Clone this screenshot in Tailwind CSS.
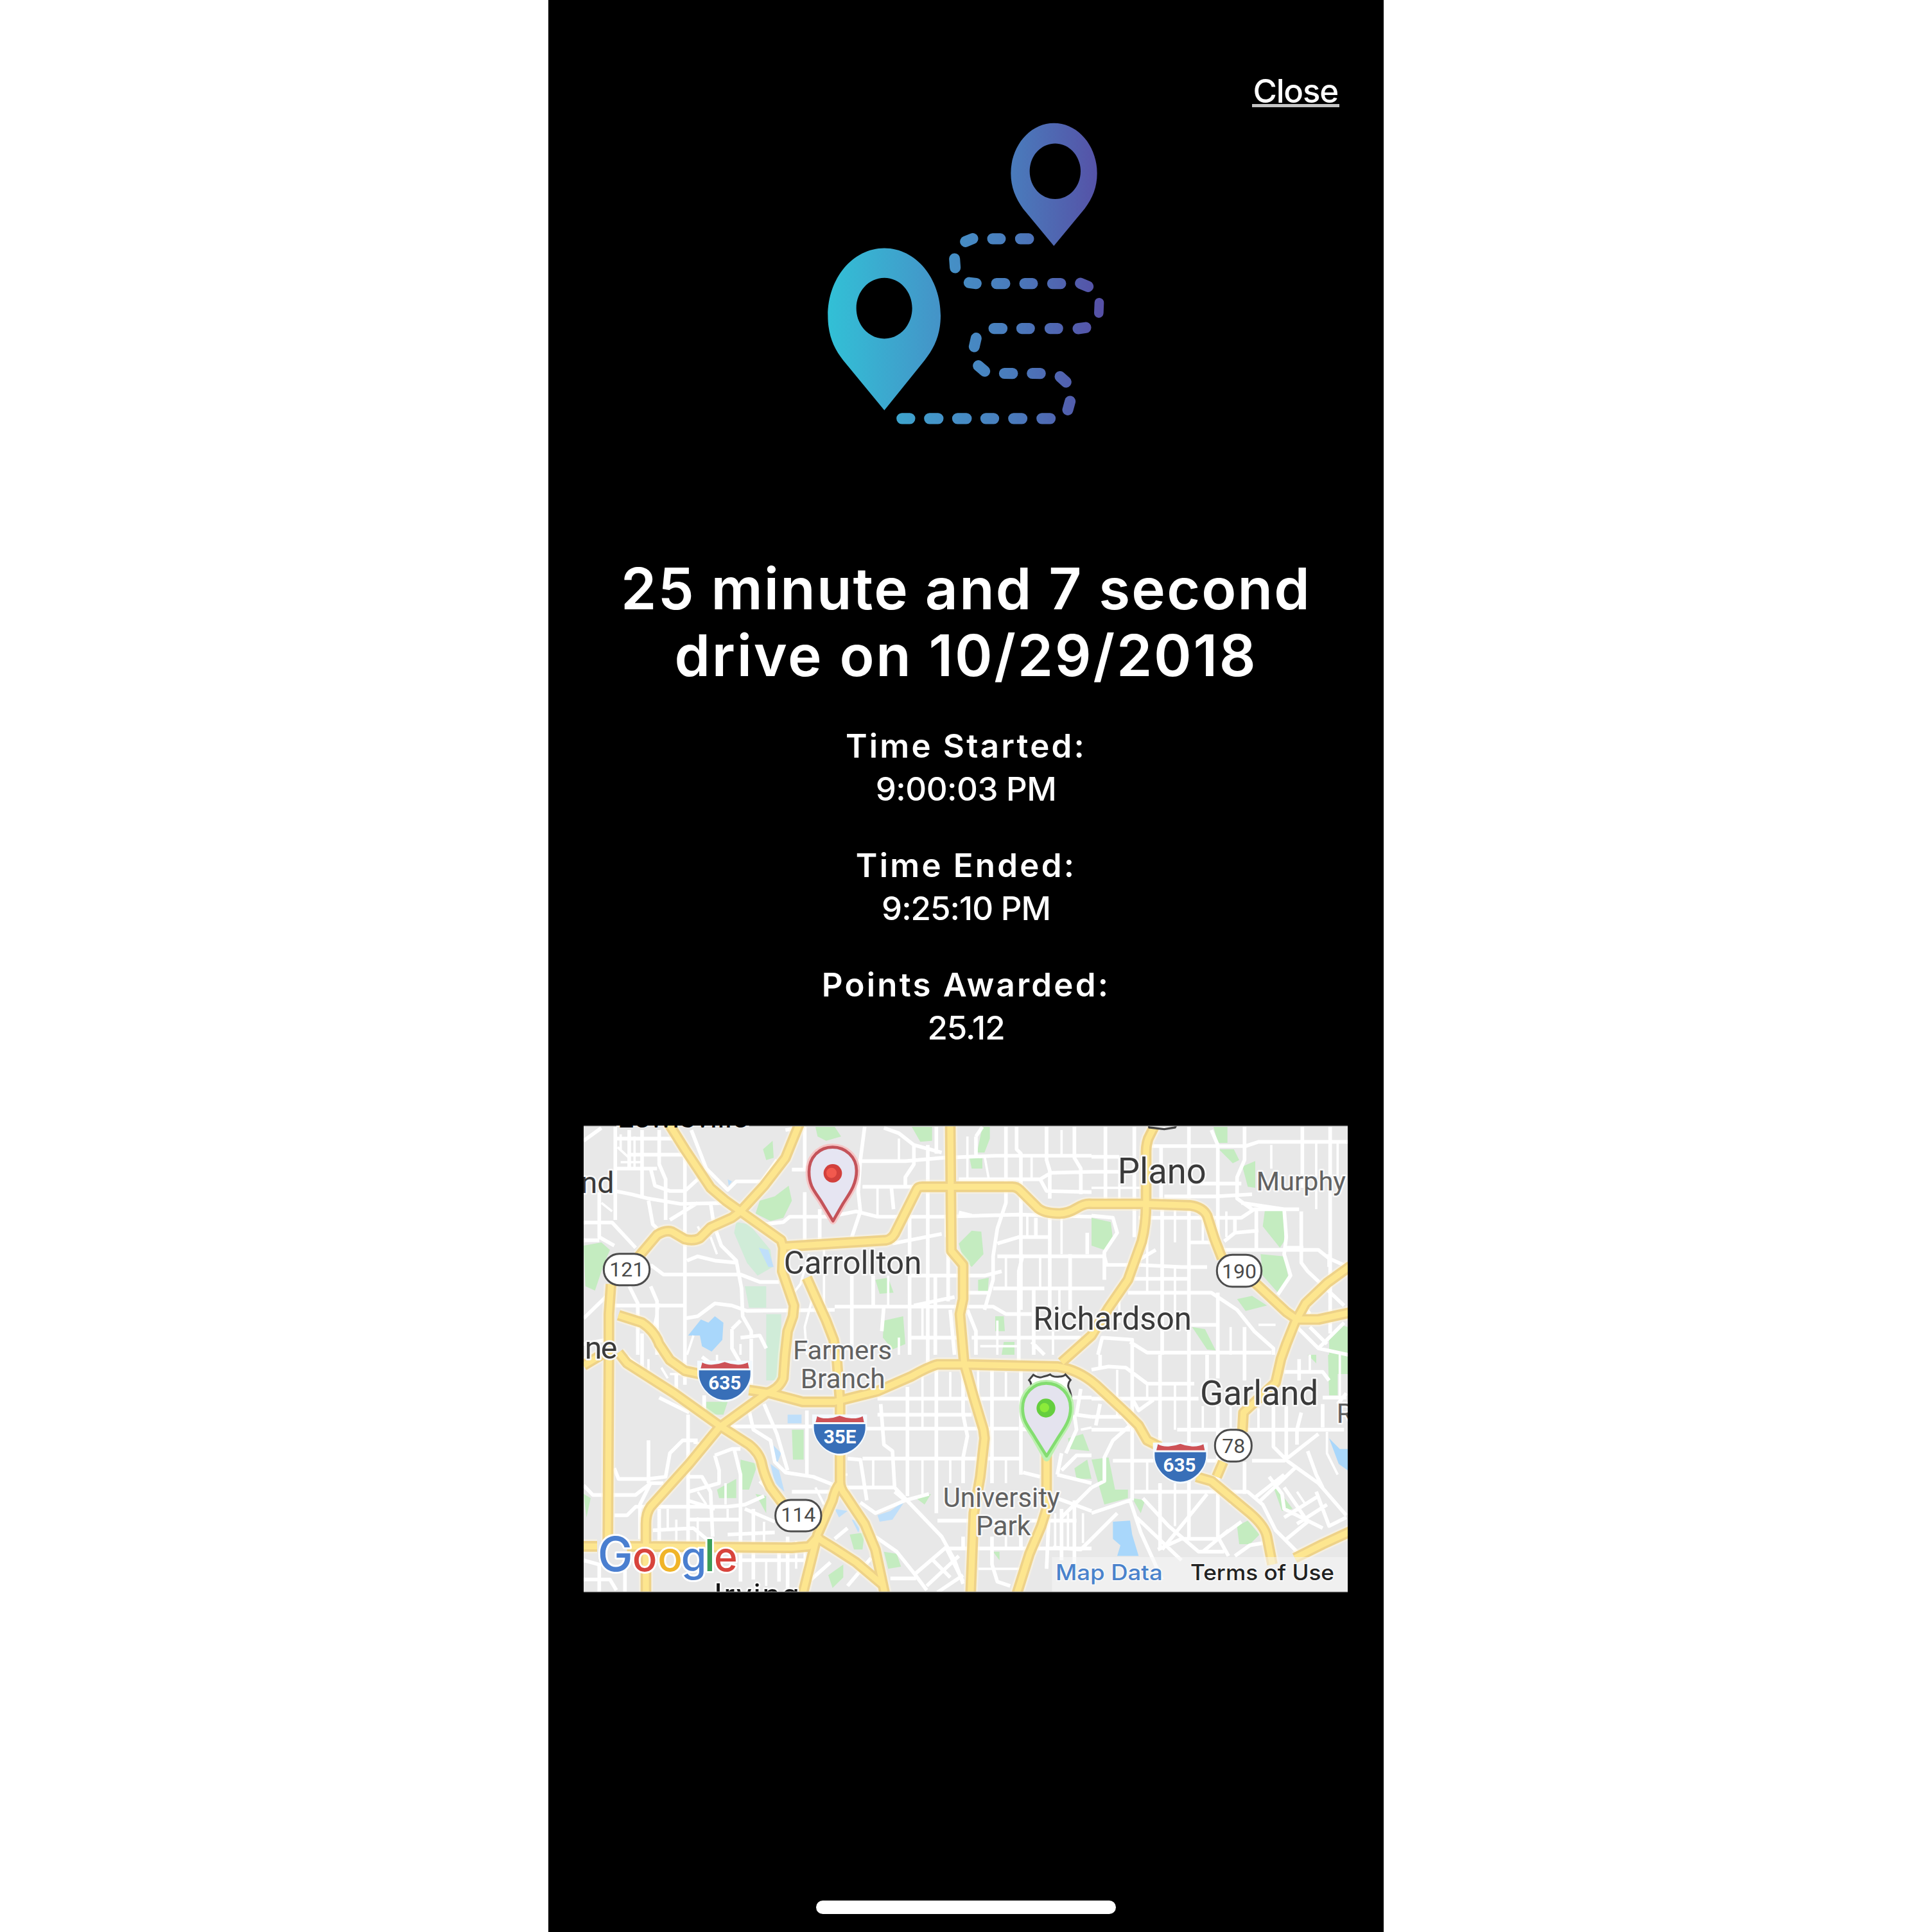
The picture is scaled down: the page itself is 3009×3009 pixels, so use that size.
<!DOCTYPE html>
<html lang="en">
<head>
<meta charset="utf-8">
<title>Drive details</title>
<script src="https://cdn.jsdelivr.net/npm/@tailwindcss/browser@4"></script>
</head>
<body class="bg-white">
<main class="mx-auto flex h-[3009px] w-[1301px] flex-col overflow-hidden bg-black font-['Inter',sans-serif] text-white">
  <header class="flex h-[190px] justify-end pt-[110px] pr-[69px]">
    <a class="h-[57px] border-b-[5px] border-[#c4c4c4] pr-0.5 pl-0.5 text-[51px] leading-[63px] font-medium tracking-[-1.2px]">Close</a>
  </header>

  <svg class="ml-[396px] block h-[500px] w-[500px] shrink-0" viewBox="0 88.7 1500 1479.3" preserveAspectRatio="none" fill="none">
    <defs>
      <linearGradient id="route" gradientUnits="userSpaceOnUse" x1="120" y1="0" x2="1400" y2="0">
        <stop offset="0" stop-color="#32c0d6"/><stop offset=".4" stop-color="#4494c8"/><stop offset=".68" stop-color="#4a7abb"/><stop offset="1" stop-color="#5650a6"/>
      </linearGradient>
    </defs>
    <path fill="url(#route)" fill-rule="evenodd" d="M382 670C530 670 645 810 645 980C645 1070 615 1130 570 1187L382 1417L190 1187C145 1130 118 1070 118 980C118 810 234 670 382 670ZM382 807C309 807 251 870 251 947C251 1024 309 1087 382 1087C455 1087 512 1024 512 947C512 870 455 807 382 807Z"/>
    <path fill="url(#route)" fill-rule="evenodd" d="M1174 94C1288 94 1376 200 1376 325C1376 390 1355 440 1318 488L1174 660L1030 488C995 440 973 390 973 325C973 200 1062 94 1174 94ZM1180 188C1114 188 1061 245 1061 316C1061 387 1114 444 1180 444C1246 444 1299 387 1299 316C1299 245 1246 188 1180 188Z"/>
    <g stroke="url(#route)" stroke-width="51" stroke-linecap="round">
      <path d="M1018 627L1056 627.1M888 627L924 627.1M761 640L795 626M710 719L713 760M778 829L811 833M906 833L945 833.1M1038 833L1074 833.1M1168 833L1206 833.1M1298 832L1334 847M894 1040L932 1040.1M1024 1040L1060 1040.1M1156 1040L1192 1040.1M1287 1041L1323 1036M811 1085L802 1124M821 1212L851 1237M943 1247L981 1247.1M1073 1247L1111 1247.1M1203 1262L1231 1287M1250 1376L1239 1415M464 1455L501 1455.1M593 1455L633 1455.1M724 1455L765 1455.1M856 1455L893 1455.1M986 1455L1025 1455.1M1118 1455L1157 1455.1"/>
      <path stroke-width="44" d="M1386 921L1384 969"/>
    </g>
  </svg>

  <h1 class="mt-[175px] text-center text-[89px] leading-[104px] font-semibold whitespace-nowrap"><span class="tracking-[2.2px]">25 minute and 7 second</span><br><span class="tracking-[2.7px]">drive on 10/29/2018</span></h1>

  <dl class="mt-[55px] flex flex-col gap-[52px] text-center text-[51px] leading-[67px]">
    <div><dt class="font-semibold tracking-[3.2px]">Time Started:</dt><dd class="font-medium tracking-[-0.5px]">9:00:03 PM</dd></div>
    <div><dt class="font-semibold tracking-[3.2px]">Time Ended:</dt><dd class="font-medium tracking-[-1px]">9:25:10 PM</dd></div>
    <div><dt class="font-semibold tracking-[3.2px]">Points Awarded:</dt><dd class="font-medium tracking-[-1px]">25.12</dd></div>
  </dl>

  <svg class="mt-[119px] ml-[55px] block h-[727px] w-[1190px] shrink-0 bg-[#e8e8e8] font-['Roboto',sans-serif]" viewBox="27 39 3570 2181" fill="none">
    <!-- parks -->
    <g fill="#c4ecc0">
      <path d="M27 600L110 585L150 620L120 690L80 810L35 790Z"/>
      <path d="M865 150L910 110L915 190L880 200ZM1110 45H1200L1230 90L1160 110L1120 90Z"/>
      <path d="M985 320L1000 390L960 470L900 485L830 450L850 390L920 370Z"/>
      <path fill="#d0ecd8" d="M740 490L800 500L900 620L910 700L840 740L790 680L730 540ZM780 790L880 790V890H800ZM880 920H950V1230H880Z"/>
      <path d="M1560 45H1655V110L1600 115ZM1890 45H1925V100L1900 165H1865ZM1830 190H1890V240H1840ZM1780 590L1840 530L1885 535L1895 640L1840 700L1800 660ZM1870 760L1920 750L1915 820L1870 815ZM1390 760L1450 750L1475 820L1410 825ZM1430 950L1520 930L1530 1060L1470 1085L1425 1030ZM1950 930L1990 930L1995 1000H1950ZM1990 1050H2040V1110H1980Z"/>
      <path d="M2970 45H3035V120H2990ZM2995 150H3065L3090 200L3060 215ZM3105 230L3165 205V330L3130 325ZM2400 470L2490 490L2500 570L2460 620L2400 600ZM3210 435H3300V580L3280 610L3200 510ZM3190 640L3300 650L3320 750L3280 830L3200 740ZM3080 850L3150 835L3220 880L3120 905ZM2870 980L2930 990L2980 1090L2940 1085ZM3560 970L3597 980V1200H3510V1040Z"/>
      <path d="M3505 1110H3550V1300H3510ZM3410 1110H3450V1150ZM2400 1600L2480 1590L2510 1740L2570 1740V1780L2460 1810ZM2590 1780L2650 1790L2630 1850ZM3080 1910L3130 1885L3185 1950L3140 1995H3090ZM3240 1700L3340 1830L3290 1840Z"/>
      <path d="M600 1330H700L680 1390H600ZM1000 1460H1055V1600H1005ZM760 1600L840 1620L800 1740L760 1740ZM650 1740L740 1690V1780H660ZM830 1760L880 1770V1850ZM27 1760L60 1780L40 1870ZM1270 1950L1340 1940L1330 2020L1290 2020ZM1430 2030L1490 2040L1510 2100L1450 2110ZM1580 1780L1650 1760L1620 1810ZM1940 2030H1970V2070ZM2290 1500L2360 1480L2390 1560L2300 1550ZM2320 1640L2380 1600L2400 1690L2330 1690ZM1170 2140L1240 2090V2150L1190 2200Z"/>
    </g>
    <!-- water -->
    <g fill="#a9d7fb">
      <path d="M515 1020L575 945L610 960L640 930L680 960L675 1040L625 1095L580 1070L570 1020Z"/>
      <path fill="#bfdffa" d="M845 610L890 620L915 700L890 700ZM980 1390H1045V1430H980ZM900 1620L940 1650L965 1750L920 1710ZM1280 1880L1330 1890L1310 1940ZM1400 1860L1460 1840L1530 1790L1470 1880L1410 1890ZM1200 1830L1260 1840L1220 1870ZM910 1530L950 1570L930 1620ZM700 290L720 300L705 320Z"/>
      <path d="M2500 1890L2580 1885L2590 1950L2620 2050L2520 2050L2535 2000L2500 1970ZM3510 1500L3560 1550H3597V1650L3555 1620Z"/>
    </g>
    <!-- local streets -->
    <g stroke="#fff" stroke-width="17" stroke-linejoin="round">
      <path d="M27 110L110 50M175 45V480M240 60V240M300 60V380M380 60V220L410 290V480M175 100H450M240 175H500M175 240H370M500 170V1250M340 240L360 320L430 345H500L560 290M175 345L250 360L330 380L480 405L720 400M27 492H160L270 610M100 350V560L170 600M27 575H100M330 390L350 500L370 520M430 480L560 400M620 400L635 500L670 600L740 670L765 800L770 930L810 1000V1250M510 670L560 650L640 670L740 680M340 690L400 735H760L850 770H940M27 940L140 830M150 880H500M240 790L280 870V1110M340 790L370 860V1110M500 940L560 930L640 870L720 880L790 905L1200 900M720 990L760 950M720 990V1080L760 1150M760 1030L850 1020L880 1080M530 60L600 240L700 340L740 300H860L930 200M1000 245H1060V45M1060 350V580M870 500L960 490L990 465H1200M1130 430V580M970 60L1060 45M300 1010V1200M27 1060L130 1040"/>
      <path stroke-width="11" d="M200 80V150M265 90V240M200 210H300M185 140L240 190M110 400L160 440M380 870L350 1000L400 1050M560 510L590 570M620 560L650 640M760 1060V1110M540 1020L510 1110M650 1110V1200M1080 640L1040 780L1000 830M1150 620V900M1100 830L1060 980L1070 1110"/>
      <g transform="translate(1200 0)">
        <path d="M140 45L120 200L110 350L120 440L80 560M110 205H330L500 190L750 180H1200M230 50L300 75L370 130L500 165M370 130V220L330 280V330M130 325H400M265 330L275 430M0 460L100 440L200 465L500 465L860 455L1200 465M435 130V300M475 45V170M435 350V1150M350 470V1110M270 590L500 545M800 45V400L760 520L740 650V760L700 900M850 45V150L870 170V900M990 45V200L1005 250V380M1120 45V190L1150 240V360M960 290L1010 260L1200 255M960 290L990 345L1200 350M580 290H960M580 445L640 460M660 90L690 45M660 90V180M760 590L860 560H1000M880 640L860 720V1150M760 650H1200M740 800H1200M620 820L720 820M350 740H700L780 720M470 740V1110M0 885H740L800 920H920M370 880L560 840M80 740V1110M180 740V880M230 880L220 1000M540 900L560 1110M350 1030H580M620 900L660 1000V1110M0 1080H80M640 1030H1150M930 800V1110M1005 460V930M1100 640V900M920 1050L980 1110M940 470V560M530 640V860M1180 540V640"/>
        <path stroke-width="11" d="M60 200V330M200 330V460M300 100V200M520 465V560M620 90V290M700 180L720 290M920 180V290M1060 60V180M900 460V560M1060 470V640M800 650V800M960 650V800M1050 800V930M250 740V880M300 1030V1110M410 885V1030M760 950V1110M1020 1000V1110M680 1070H860"/>
      </g>
      <g transform="translate(2400 0)">
        <path d="M65 45V400M200 45V560M325 130V400M455 45V380M330 420V1110M455 420V1110M0 185H130M0 255H130M280 135H720L780 115H1200M560 60L590 130V560M715 45V200L680 280V380L750 430M985 45V330M1115 45V1010M0 460L100 470L120 540L60 630V760M220 470H700L760 430H970M460 585H590M620 580L670 540L780 530M770 430V620M340 370L580 370L750 360M700 400L900 430L910 560L900 640L930 740L870 830M980 440V680L1010 720L1180 880M600 620H1060L1110 660L1200 700M0 650H60L70 690H180L300 620M220 690L420 700H540M200 755H460M170 820H560L680 900L760 1000L850 1080V1110M0 800H60M460 970L590 970M590 820V1110M715 980V1110M190 1110V1040L50 1030L30 1110M180 1050L260 1100H840M960 980L1060 1080L1200 1110M1020 980L1100 1060M1060 1080L1180 960M900 610L990 610M460 310H700M670 470V540M980 860L1020 920M1110 640V700"/>
        <path stroke-width="11" d="M130 185V400M0 330H250M260 560V820M390 420V585M520 420V585M630 440V560M840 130V240M1050 120V430M390 700V970M650 980V1110M130 820V960M1060 800L1120 740M780 970H860M1150 120V330"/>
      </g>
      <g transform="translate(0 1110)">
        <path d="M330 400V600M170 530L190 580H330L410 570L430 460L490 400H560M27 610L70 655H270L340 600H400M340 600L290 700V860M170 750H230L270 710H700L780 700L870 660M515 280V880M380 200L520 270M230 10L330 90L460 180M590 190V260M700 335H1100M800 260L820 350L900 400L920 500L970 550L1100 570L1200 610M870 230L930 370L980 540M1070 260V560M640 470L720 440H760M640 470L660 540V600L520 640M730 440L760 560V880M520 570H580L620 640L630 850M510 680L640 720M510 770H760M780 720L920 780M350 820L540 810L600 860M380 720V870M700 840L920 830M820 720V880M980 850V1110M760 960H1100M820 920V1050M760 920V1060M940 920V1060M27 960L100 980V1110M220 1000V1110M27 1050H150L180 1100M1090 1050L1180 970M1000 640H1200M440 60H500M460 90V180M580 10L620 40M850 590L900 640"/>
        <path stroke-width="11" d="M330 20V110M390 60L420 110M430 90H560M540 410L600 420M690 600V700M560 640L600 700M420 720V810M460 770V870M560 760V870M700 720V770M870 780V880M1020 870V1000M1060 920V1080M880 960V1080M290 920V1000M1110 620L1150 700"/>
      </g>
      <g transform="translate(1200 1110)">
        <path d="M340 150V660M475 50V740M600 70V280L620 380L600 480V600M735 60V600M870 60V560M200 205H870M200 280H640M150 345H860M130 485H870M215 230L230 420L270 450L280 620L500 850L560 960L600 1070M60 485L120 490L150 680M50 620H280M280 640L330 680L440 650M120 690L190 740L330 680M190 850L290 920L370 1020L430 1100M60 810L0 860M60 1080L170 950M260 1045H380M380 1020L520 900M430 1080L580 940M480 1110L600 1030M520 900L600 1060M450 950L540 1040M480 775H640M720 775H1130M530 905H1200M735 850V980L760 1060L820 1080M870 770V905M600 850V900M880 550L960 570M1040 560L1200 600M1010 660L1120 700L1200 730M1060 460L1040 560M1060 540L1130 470H1200M1120 280L1130 350L1080 460M1060 200L1200 200M1150 160L1130 280L1200 290M1000 770L990 1000M1060 720V960M1120 680V1000M1200 620L1060 760M870 50H1000M870 345L900 350M0 340L130 350M1020 900L1150 910L1200 860"/>
        <path stroke-width="11" d="M410 70V345M540 80V205M670 60V200M800 80V205M180 490V620M410 490V650M540 490V600M800 490V600M800 780V905M940 80V110M1030 740V900M1090 740V900M1160 740V880M1150 350L1200 340M0 560H60M60 630V700M670 1000H900"/>
      </g>
      <g transform="translate(2400 1110)">
        <path d="M0 70L80 55L160 60L260 135H480M190 0V680M320 0V400M455 0V860M590 0V110M590 240V860M715 0V120M715 500V650M0 205H500M190 205L220 260L290 210M0 290H150L180 330L100 400L60 480V590L0 620M0 350H180M400 350H1180M100 495H290M540 495H590M750 495H900L1060 370M850 230V430L920 500L1060 600L1190 750M910 240V480M980 270L960 350V420M1010 450L1050 560L1080 620M200 640H730L800 700L860 820L960 920M0 740L180 680L230 830L330 1050M0 860L120 740M240 670L360 800L500 920H620M330 910L540 650M210 760L420 960M310 910L420 860H590L700 780M520 920L640 820M590 850L640 940M670 940L740 890L800 880M760 670L900 560M780 690L960 520M830 570L890 650L900 720L1080 810M900 760L1060 660M960 790L1100 700M1050 640L1110 800L1190 760M900 870L1010 780M320 600V900M540 0V120M900 80H1080L1110 120M1080 200H1190M970 20V120M1080 230V340M1150 230L1190 180M40 230L20 330M40 0V60M900 620L1010 780"/>
        <path stroke-width="11" d="M120 70V205M260 140V205M390 140V350M520 240V350M650 240V350M780 250V350M120 210V290M390 600V800M260 500V640M650 640V700M1100 360V460L1150 560M960 640L1000 700M1160 0V200M770 160V230M1020 0V80"/>
      </g>
    </g>
    <!-- highways, casing then centre -->
    <defs>
      <g id="highways">
        <path d="M425 30L500 150L620 330L690 390L760 440L950 575L960 610L955 720L1010 880L1005 930L980 1000L968 1110L960 1220Q940 1270 880 1290L660 1450L520 1620L340 1820Q318 1850 318 1900V2230"/>
        <path d="M1035 30L970 190L870 320L760 440L720 470L620 515L570 565Q540 580 500 570L440 535Q410 525 370 550L285 650"/>
        <path d="M960 605L1200 590L1440 575Q1465 570 1480 545L1585 335Q1590 325 1610 325H2030Q2050 325 2065 340L2150 425Q2180 450 2250 450Q2290 450 2330 425T2400 405H2650L2860 412Q2920 420 2940 460L2975 570L3010 660M3160 770L3310 910L3360 945H3460L3610 912"/>
        <path d="M1740 30L1745 625L1800 690V850L1785 920L1805 1150L1850 1310L1895 1460L1900 1500L1880 1680L1850 1850L1835 2230"/>
        <path d="M2700 30L2665 100Q2655 130 2655 160V400Q2655 500 2635 580L2570 760L2480 890L2400 1020L2260 1145"/>
        <path d="M190 925L300 960Q360 1000 380 1060L430 1135L500 1185L570 1200M800 1275L900 1290L1050 1330H1200L1400 1280L1560 1210Q1640 1165 1680 1155H1800L2240 1165Q2340 1180 2420 1250L2560 1380L2620 1440L2660 1510L2720 1540M2890 1680L2960 1700L3140 1850Q3210 1910 3220 1960L3245 2090"/>
        <path d="M27 1160L110 1110M190 1100L230 1150L450 1290L660 1440L800 1530Q850 1570 860 1620T900 1730L960 1810M1110 1960L1200 2015L1300 2080L1430 2190"/>
        <path d="M155 780L145 920V1110L140 1980"/>
        <path d="M1070 750L1110 840L1160 950L1195 1040L1210 1130L1225 1330V1700Q1225 1735 1250 1765L1340 1900L1390 2020L1435 2230M1225 1710Q1200 1740 1190 1790L1120 1950L1050 2230"/>
        <path d="M27 2005H90M230 2005L1000 2012L1080 2005L1130 1950"/>
        <path d="M3610 695L3500 775L3400 870L3350 960L3310 1060L3285 1130L3260 1240L3110 1380L3105 1470M3015 1610L2985 1680"/>
        <path d="M2190 1570V1830L2165 1910L2110 2040L2050 2230M3610 1935L3480 1995L3350 2060"/>
      </g>
    </defs>
    <use href="#highways" stroke="#fff6e0" stroke-width="66" stroke-linejoin="round" opacity=".55"/>
    <use href="#highways" stroke="#eed288" stroke-width="50" stroke-linejoin="round"/>
    <use href="#highways" stroke="#fde68f" stroke-width="28" stroke-linejoin="round"/>

    <rect x="2215" y="2055" width="1400" height="170" fill="#f7f7f7" opacity=".5"/>

    <!-- clipped US route shield on the top edge -->
    <path d="M2665 30H2800L2790 48L2740 56L2670 48Z" fill="#fff" stroke="#444" stroke-width="10"/>

    <!-- state route badges -->
    <g fill="#fff" stroke="#4c4c4c" stroke-width="9">
      <rect x="121" y="638" width="214" height="147" rx="72"/><rect x="2986" y="643" width="208" height="149" rx="72"/>
      <rect x="923" y="1788" width="214" height="147" rx="72"/><rect x="2977" y="1460" width="171" height="149" rx="72"/>
    </g>
    <g fill="#4a4a4a" font-size="96" text-anchor="middle">
      <text x="229" y="745">121</text><text x="3090" y="752">190</text><text x="1030" y="1891">114</text><text x="3064" y="1568">78</text>
    </g>

    <!-- interstate shields -->
    <defs>
      <g id="shield">
        <path d="M-8 -8H248V50C248 110 190 184 122 184C55 184 -8 110 -8 50Z" fill="#f4faff"/>
        <path d="M15 0Q35 12 65 10Q95 8 120 -2Q145 8 175 10Q205 12 228 0L234 28H8Z" fill="#cd5257"/>
        <path d="M0 37H240V55C240 110 185 175 120 175C55 175 0 110 0 55Z" fill="#386fb8"/>
      </g>
    </defs>
    <use href="#shield" x="566" y="1146"/><use href="#shield" x="1103" y="1397"/><use href="#shield" x="2695" y="1528"/>
    <g fill="#fff" font-size="89" font-weight="700" text-anchor="middle">
      <text x="686" y="1273">635</text><text x="1224" y="1523">35E</text><text x="2811" y="1656">635</text>
    </g>

    <!-- place names -->
    <g fill="#3a3a3a" stroke="#f8f8f8" stroke-width="16" stroke-linejoin="round" paint-order="stroke">
      <text x="170" y="353" font-size="140" text-anchor="end">nd</text>
      <text x="32" y="1129" font-size="145" textLength="152">ne</text>
      <text x="962" y="731" font-size="150" textLength="644" lengthAdjust="spacingAndGlyphs">Carrollton</text>
      <text x="2522" y="310" font-size="165" textLength="414" lengthAdjust="spacingAndGlyphs">Plano</text>
      <text x="2128" y="993" font-size="151" textLength="740" lengthAdjust="spacingAndGlyphs">Richardson</text>
      <text x="2907" y="1344" font-size="160" textLength="553" lengthAdjust="spacingAndGlyphs">Garland</text>
      <text x="185" y="49" font-size="140" fill="#000" stroke="none" textLength="610">Lewisville</text>
      <text x="635" y="2286" font-size="150" fill="#111" textLength="400">Irving</text>
      <g fill="#616161">
        <text x="3170" y="341" font-size="124" textLength="418" lengthAdjust="spacingAndGlyphs">Murphy</text>
        <text x="1005" y="1130" font-size="122" textLength="462" lengthAdjust="spacingAndGlyphs">Farmers</text>
        <text x="1040" y="1265" font-size="126" textLength="396" lengthAdjust="spacingAndGlyphs">Branch</text>
        <text x="1706" y="1820" font-size="129" textLength="546" lengthAdjust="spacingAndGlyphs">University</text>
        <text x="1860" y="1952" font-size="129" textLength="256" lengthAdjust="spacingAndGlyphs">Park</text>
        <text x="3545" y="1428" font-size="125">R</text>
      </g>
    </g>

    <!-- destination US route shield behind the green marker -->
    <path d="M2118 1262Q2120 1240 2108 1228L2128 1204Q2155 1222 2175 1212Q2195 1208 2207 1202Q2220 1216 2250 1212Q2270 1212 2278 1202L2302 1228Q2288 1244 2292 1262Q2306 1290 2306 1322L2200 1400L2112 1300Z" fill="#fff" stroke="#444" stroke-width="9"/>

    <!-- markers -->
    <g stroke-width="14" stroke-linejoin="round">
      <path d="M1190 140C1250 140 1302 185 1302 250C1302 320 1262 365 1238 405L1192 485L1135 390C1105 345 1080 320 1080 255C1080 185 1130 140 1190 140Z" fill="#e6e5f2" stroke="#f5c6c6" stroke-width="32"/>
      <path d="M1190 140C1250 140 1302 185 1302 250C1302 320 1262 365 1238 405L1192 485L1135 390C1105 345 1080 320 1080 255C1080 185 1130 140 1190 140Z" fill="#e6e5f2" stroke="#c4535a"/>
      <circle cx="1191" cy="262" r="43" fill="#d2403c"/><circle cx="1185" cy="260" r="24" fill="#f2594e"/>
      <path d="M2188 1243C2250 1243 2302 1290 2302 1358C2302 1425 2262 1465 2236 1510L2190 1592L2138 1500C2110 1450 2078 1425 2078 1360C2078 1290 2130 1243 2188 1243Z" stroke="#bdf0b0" stroke-width="32"/>
      <path d="M2188 1243C2250 1243 2302 1290 2302 1358C2302 1425 2262 1465 2236 1510L2190 1583L2138 1500C2110 1450 2078 1425 2078 1360C2078 1290 2130 1243 2188 1243Z" fill="#e4e3ee" stroke="#83dd70"/>
      <circle cx="2187" cy="1359" r="44" fill="#65ce3e"/><circle cx="2180" cy="1357" r="22" fill="#8ceb3a"/>
    </g>

    <!-- attribution -->
    <g class="font-['Inter',sans-serif]" font-size="222" font-weight="500" stroke="#fff" stroke-width="18" stroke-linejoin="round" paint-order="stroke">
      <text x="92" y="2120" fill="#4a7fd0" textLength="165" lengthAdjust="spacingAndGlyphs">G</text>
      <g font-size="192">
        <text x="254" y="2120" fill="#d8443c">o</text><text x="373" y="2120" fill="#f0b429" textLength="116" lengthAdjust="spacingAndGlyphs">o</text><text x="482" y="2120" fill="#4a7fd0">g</text><text x="636" y="2120" fill="#d8443c" textLength="110" lengthAdjust="spacingAndGlyphs">e</text>
      </g>
      <text x="590" y="2120" font-size="205" fill="#3d9e57">l</text>
    </g>
    <g class="font-['Inter',sans-serif]" font-size="100" font-weight="500" stroke="#f8f8f8" stroke-width="10" paint-order="stroke">
      <text x="2232" y="2162" fill="#4a82cc" textLength="500" lengthAdjust="spacingAndGlyphs">Map Data</text>
      <text x="2862" y="2162" fill="#222" textLength="672" lengthAdjust="spacingAndGlyphs">Terms of Use</text>
    </g>
    <path d="M27 41H180M800 41H3597M27 2218H3597" stroke="#8a8a8a" stroke-width="4"/>
  </svg>

  <div class="mx-auto mt-auto mb-[28px] h-[21px] w-[467px] rounded-full bg-white"></div>
</main>
</body>
</html>
